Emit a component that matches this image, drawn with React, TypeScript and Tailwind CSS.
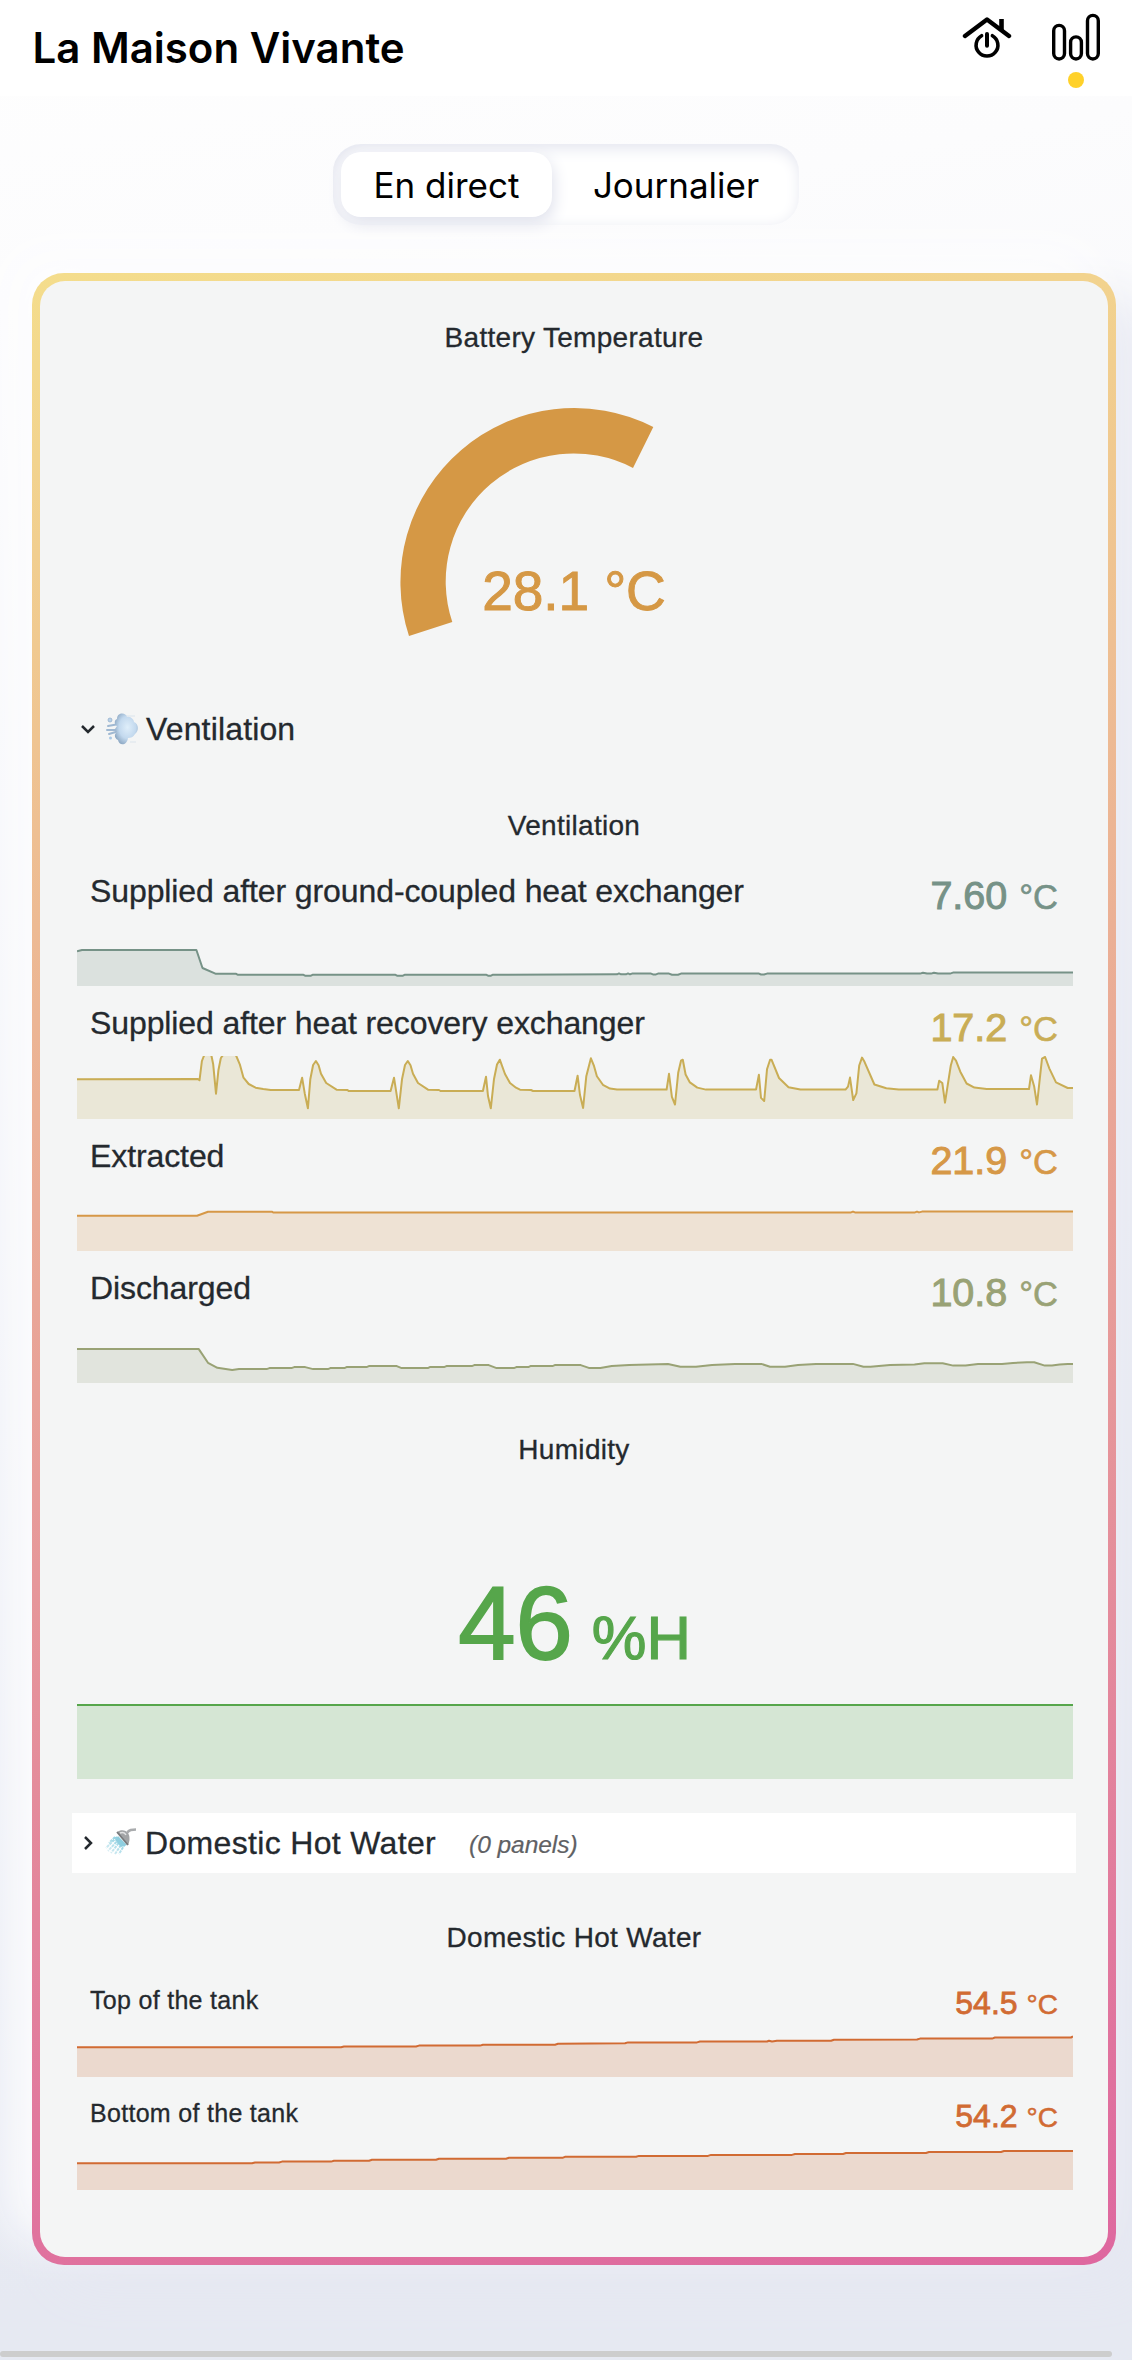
import React from "react";

const HELV = "font-['Liberation_Sans',Arial,sans-serif]";

type Pt = [number, number];

const groundExchanger: Pt[] = [
  [0, 28.3], [5, 27], [119.4, 27], [125.5, 45], [138.4, 50.7], [158.7, 50.7], [160.5, 51.7],
  [226, 51.7], [228, 52.7], [234, 52.7], [236, 51.7], [318, 51.7], [320, 52.7], [326, 52.7], [328, 51.7],
  [409, 51.7], [411, 52.7], [414, 52.7], [416, 51.7], [540, 51.3], [542, 50.4], [544, 51.3], [549, 51.3],
  [551, 50.4], [553, 51.3], [555, 50.6], [574, 50.6], [576, 51.4], [579, 51.4], [581, 50.6], [592, 50.6],
  [595, 51.7], [601, 51.7], [604, 50.6], [682, 50.6], [684, 51.5], [687, 51.5], [690, 50.6], [843, 50.6],
  [846, 49.7], [850, 50.6], [854, 50.6], [857, 49.7], [861, 50.6], [873, 50.6], [876, 49.6], [996, 49.6],
];

const heatRecovery: Pt[] = [
  [0, 23.3], [120.7, 23], [122.5, 24.3], [124.9, 5], [126.9, 0], [129, -3], [132, -3], [134.5, 0], [136.2, 8.3], [139, 37.7],
  [141.4, 14.3], [143.8, 2.3], [145.2, 0], [148, -3], [156, -3], [159.3, 0], [162.8, 8.3], [166.5, 21.7],
  [171.7, 28], [178.6, 31.7], [186.2, 33], [193.7, 34], [222, 34], [225.1, 21.7], [227.8, 37.7], [230.9, 52.3],
  [233.3, 23.3], [236.1, 9], [238.9, 5], [241.6, 9.3], [244, 17.7], [249.2, 27], [259.5, 33.7], [270.5, 34],
  [271.6, 35], [313.6, 35], [317, 21.7], [319.5, 37.7], [321.8, 52.3], [325, 23.3], [328, 9], [330.8, 5],
  [333.5, 9.3], [336, 17.7], [341, 27], [351, 33.7], [362, 34], [363.5, 35], [405.9, 35], [409, 20.7],
  [411, 40], [413.8, 52.3], [417, 23], [420, 8.5], [422.8, 3.7], [428, 18], [433, 27], [439, 31.7], [443, 33.7], [454, 34],
  [456, 35], [497.5, 35], [500.6, 19.7], [503, 39], [506.1, 52], [509.3, 20.2], [513.9, 2.3], [517, 9.9],
  [519.9, 20.2], [525.9, 28.8], [533, 32.6], [540, 33.6], [589.6, 33.6], [592, 17.8], [594.9, 40.9],
  [598, 48.5], [601.2, 16.8], [604, 4.7], [605.8, 3.7], [608.6, 18.5], [612.9, 26.4], [620.3, 31.6],
  [629, 33.6], [679, 33.6], [681.9, 18.8], [684, 41.9], [687.2, 45], [690, 13.3], [693.1, 3.7],
  [694.5, 3.7], [702, 22], [711.5, 31.2], [723.4, 33.6], [768.5, 33.6], [771, 30.6], [773, 21.6],
  [776.2, 44], [779.4, 37.4], [782.2, 9.5], [785, 1.6], [787.5, 5.8], [797.4, 28.5], [809.3, 32.3],
  [821.7, 33.6], [860.4, 33.6], [862.2, 24.7], [865.3, 27], [868, 46.7], [871.3, 25.4], [873.8, 9.5],
  [876.2, 1], [879, 4.7], [883.3, 15.7], [889.6, 27.5], [897.4, 31.6], [909.7, 33], [952, 33], [954, 19.2],
  [957.2, 30.6], [960, 48.5], [962.5, 25.4], [965, 2.7], [968.1, 1], [972.4, 12.6], [979, 26.4],
  [990.7, 32], [996, 32],
];

const extracted: Pt[] = [
  [0, 27.7], [120, 27.7], [131, 23.7], [194.8, 23.7], [196.5, 24.6], [774, 24.4], [776, 23.6], [778, 24.4],
  [838, 24.4], [840, 23.6], [842, 24.4], [845, 23.6], [996, 23.6],
];

const discharged: Pt[] = [
  [0, 29.1], [121.8, 29.1], [131, 42.8], [140.4, 47.8], [155.2, 50.1], [162, 49.1], [189.6, 49.1],
  [192.4, 48.1], [214.4, 48.1], [217.2, 47.1], [228.2, 47.1], [236.1, 49.1], [250.9, 49.1], [253.3, 48.1],
  [267.4, 48.1], [269.5, 47.1], [289.5, 47.1], [291.9, 46.1], [319.8, 46.1], [324.6, 48.1], [350.8, 48.1],
  [352.8, 47.1], [367, 47.1], [369.4, 46.1], [394.8, 46.1], [397.3, 45.1], [411.7, 45.1], [419.6, 48.1],
  [436.9, 48.1], [439.3, 47.1], [451.3, 47.1], [453.4, 46.1], [475.4, 46.1], [477.8, 45.1], [503.7, 45.1],
  [511.8, 47.9], [523.4, 47.9], [534.7, 46], [552.3, 45], [591, 43.9], [603.4, 46.7], [619, 46.7],
  [635, 45], [658, 43.9], [684.3, 43.9], [693, 46.7], [708, 46.7], [721, 45], [739, 43.9], [775.9, 43.9],
  [786.5, 46.7], [793.5, 46.7], [813, 45], [837.5, 44.4], [847.4, 43.2], [865.7, 43.2], [876.2, 45.6],
  [888.6, 45.6], [901, 43.9], [925, 43.9], [936, 42.9], [950, 42.2], [957.2, 42.2], [967.8, 45.6],
  [975, 45.6], [982.6, 44.6], [990.7, 43.9], [996, 43.9],
];

const tankTop: Pt[] = [
  [0, 18.3], [264, 18.3], [267, 17.5], [339, 17.5], [342, 16.6], [403, 16.6], [406, 15.7], [478, 15.7],
  [481, 14.8], [548, 14.3], [551, 13.4], [620, 13.4], [623, 12.5], [690, 12.5], [692, 11.7], [695, 12.5],
  [700, 11.7], [754, 11.7], [757, 10.7], [840, 10.5], [843, 9.6], [915, 9.6], [918, 8.5], [994, 8.5], [996, 7.5],
];

const tankBottom: Pt[] = [
  [0, 21.3], [175, 21.3], [178, 20.5], [202, 20.5], [205, 19.6], [254, 19.6], [257, 18.7], [292, 18.7],
  [295, 17.8], [359, 17.8], [362, 16.7], [429, 16.7], [432, 15.7], [486, 15.7], [488, 14.8], [559, 14.8],
  [562, 13.9], [631, 13.9], [634, 12.9], [715, 12.9], [718, 12], [766, 12], [769, 11], [849, 11],
  [852, 10], [924, 10], [927, 9], [996, 9],
];

function Spark({ points, height, color, fill }: { points: Pt[]; height: number; color: string; fill: string }) {
  const line = points.map(([x, y]) => `${x},${y}`).join(" ");
  return (
    <svg className="block w-[996px] shrink-0 overflow-hidden" height={height} viewBox={`0 0 996 ${height}`}>
      <polygon points={`0,${height} ${line} 996,${height}`} fill={fill} />
      <polyline points={line} fill="none" stroke={color} strokeWidth="2" strokeLinejoin="round" />
    </svg>
  );
}

interface Reading {
  label: string;
  value: string;
  color: string;
  fill: string;
  points: Pt[];
}

const ventilation: Reading[] = [
  { label: "Supplied after ground-coupled heat exchanger", value: "7.60", color: "#769287", fill: "#dbe1de", points: groundExchanger },
  { label: "Supplied after heat recovery exchanger", value: "17.2", color: "#c9ad55", fill: "#eae7d7", points: heatRecovery },
  { label: "Extracted", value: "21.9", color: "#d69847", fill: "#eee2d4", points: extracted },
  { label: "Discharged", value: "10.8", color: "#99a275", fill: "#e1e4dd", points: discharged },
];

const tank: Reading[] = [
  { label: "Top of the tank", value: "54.5", color: "#d16b33", fill: "#ebd9ce", points: tankTop },
  { label: "Bottom of the tank", value: "54.2", color: "#d16b33", fill: "#ebd9ce", points: tankBottom },
];

function VentRow({ r }: { r: Reading }) {
  return (
    <div className="flex h-[132.3px] flex-col justify-end">
      <div className="flex h-[69.3px] items-start justify-between pl-[13px] pr-[15px]">
        <span className="mt-[19px] text-[32px] leading-[36px] tracking-[-0.1px] [-webkit-text-stroke:0.3px_currentColor]">{r.label}</span>
        <span className="mt-[19px] whitespace-pre text-[39.5px] leading-[44px]" style={{ color: r.color }}>
          <span className="[-webkit-text-stroke:1px_currentColor]">{r.value}</span>
          <span className="ml-[12px] text-[34.5px] [-webkit-text-stroke:0.6px_currentColor]">°C</span>
        </span>
      </div>
      <Spark points={r.points} height={63} color={r.color} fill={r.fill} />
    </div>
  );
}

function TankRow({ r }: { r: Reading }) {
  return (
    <div className="flex h-[113px] flex-col justify-end">
      <div className="flex h-[65px] items-start justify-between pl-[13px] pr-[15px]">
        <span className="mt-[21px] text-[25px] leading-[30px] tracking-[0.3px] [-webkit-text-stroke:0.3px_currentColor]">{r.label}</span>
        <span className="mt-[20px] whitespace-pre text-[32px] leading-[38px]" style={{ color: r.color }}>
          <span className="[-webkit-text-stroke:0.8px_currentColor]">{r.value}</span>
          <span className="ml-[9px] text-[28px] [-webkit-text-stroke:0.5px_currentColor]">°C</span>
        </span>
      </div>
      <Spark points={r.points} height={48} color={r.color} fill={r.fill} />
    </div>
  );
}

function PanelTitle({ children }: { children: React.ReactNode }) {
  return <h3 className="-ml-[2px] text-center text-[28px] leading-[32px] tracking-[0.3px] [-webkit-text-stroke:0.3px_currentColor]">{children}</h3>;
}

function HomePowerIcon() {
  return (
    <svg className="block" width="50" height="44" viewBox="0 0 50 44" fill="none" stroke="#000" strokeLinecap="round" strokeLinejoin="round">
      <path d="M3 21 L25 4.500 L47 21" strokeWidth="4.400" />
      <path d="M39.500 4 V15" strokeWidth="4.600" strokeLinecap="butt" />
      <path d="M19.600 20.700 A10.900 10.900 0 1 0 30.400 20.700" strokeWidth="3.600" />
      <path d="M25 19 V30.700" strokeWidth="4" />
    </svg>
  );
}

function BarsIcon() {
  return (
    <svg className="block" width="48" height="50" viewBox="0 0 48 50" fill="none" stroke="#000" strokeWidth="3.400">
      <rect x="1.700" y="13.400" width="10.800" height="33.600" rx="5.400" />
      <rect x="18.600" y="24.900" width="10.800" height="22.100" rx="5.400" />
      <rect x="35.500" y="3.400" width="10.800" height="43.600" rx="5.400" />
    </svg>
  );
}

function WindIcon() {
  return (
    <svg className="block" width="32" height="34" viewBox="0 0 32 34">
      <defs>
        <radialGradient id="puff" cx="0.55" cy="0.45" r="0.6">
          <stop offset="0" stopColor="#dfeefa" />
          <stop offset="0.6" stopColor="#c3d9ee" />
          <stop offset="1" stopColor="#8ea9c4" />
        </radialGradient>
      </defs>
      <path d="M20 4 H29 M24 30 H30" stroke="#dbe4ec" strokeWidth="1" />
      <path d="M2 14 L13 12 M1 18 H13 M3 22 L13 19" stroke="#9fb8d2" strokeWidth="2" strokeLinecap="round" />
      <circle cx="4" cy="8" r="2" fill="#b9d1e8" stroke="#8facca" strokeWidth="0.700" />
      <circle cx="4.500" cy="26" r="1.500" fill="#a9c8e6" />
      <path d="M11 7 C11 0 20 0 21 5 C25 4 28 8 28 10 C33 12 33 19 29 22 C27 25 25 26 22 26 C21 34 13 34 12 28 C8 26 8 22 11 20 L9 17 L11 14 C8 12 8 8 11 7 Z" fill="url(#puff)" />
    </svg>
  );
}

function ShowerIcon() {
  return (
    <svg className="block" width="32" height="30" viewBox="0 0 32 30">
      <defs>
        <linearGradient id="spray" x1="1" y1="0" x2="0" y2="1">
          <stop offset="0" stopColor="#78c8dc" />
          <stop offset="1" stopColor="#e6f3f7" />
        </linearGradient>
      </defs>
      <path d="M12 9 L1 20 M14 11 L3 23 M16 12 L6 25 M18 14 L10 26 M20 16 L14 26 M10 9 L4 15" stroke="url(#spray)" strokeWidth="2" strokeDasharray="3 0.800" />
      <path d="M13 8 L22 17 L16 19 L10 12 Z" fill="#8fcfe0" />
      <path d="M12 4 C16 1 21 2 23 5 C25 8 25 13 23 17 Z" fill="#a2a4a6" />
      <path d="M12 4 L23 17" stroke="#77797b" strokeWidth="1.800" />
      <path d="M22 5 C24 1.500 27 1.500 31 1.500" fill="none" stroke="#a9abad" strokeWidth="2.500" />
      <path d="M15 5 C18 4 20 5 21 7" fill="none" stroke="#e2e3e4" strokeWidth="1.500" />
    </svg>
  );
}

export default function App() {
  return (
    <div className="flex h-[2360px] w-[1132px] flex-col overflow-hidden bg-[linear-gradient(170deg,#fefefe_0%,#fcfcfd_12%,#eff1f7_55%,#e6e9f2_90%)]">
      <header className="relative z-10 flex h-[96px] shrink-0 items-start justify-between bg-white pl-[32.5px] pr-[32px]">
        <h1 className="mt-[24px] font-['Inter',sans-serif] text-[42px] font-semibold leading-[48px] text-black">La Maison Vivante</h1>
        <nav className="flex gap-[40px]">
          <div className="mt-[15px]">
            <HomePowerIcon />
          </div>
          <div className="mt-[12px] flex flex-col items-center">
            <BarsIcon />
            <span className="mt-[10px] block size-4 rounded-full bg-[#ffd12a]" />
          </div>
        </nav>
      </header>

      <div className="relative z-10 mx-auto mt-[48px] flex h-[81px] w-[466px] shrink-0 rounded-[28px] bg-white p-[8px] font-['Inter',sans-serif] text-[35px] leading-[67px] text-black shadow-[inset_2px_4px_16px_#e2e4ee]">
        <div className="h-[65px] w-[211px] rounded-[20px] bg-white text-center shadow-[2px_6px_16px_#dfe1ec]">En direct</div>
        <div className="flex-1 pl-[9px] text-center">Journalier</div>
      </div>

      <div className="ml-[32px] mt-[48px] h-[1992px] w-[1084px] shrink-0 rounded-[32px] bg-[linear-gradient(170deg,#f4dd8c_0%,#e6979a_60%,#de679f_100%)] p-[8px] shadow-[-24px_-24px_48px_#fdfdfe,24px_24px_48px_#e6e8f2]">
        <div className={"flex h-full flex-col rounded-[25px] bg-[#f4f5f5] pl-[37px] pr-[35px] text-[#24292e] " + HELV}>
          <div className="mt-[41px]">
            <PanelTitle>Battery Temperature</PanelTitle>
          </div>
          <div className="relative mt-[53px] h-[230px] w-[996px]">
            <svg className="block" width="996" height="230" viewBox="77 407 996 230">
              <path d="M409 636 A174 174 0 0 1 653.300 427 L633 468 A128 128 0 0 0 452.300 622 Z" fill="#d59845" />
            </svg>
            <div className="absolute -left-[2px] right-0 top-[152px] text-center text-[55px] leading-[64px] tracking-[-0.1px] text-[#d59845] [-webkit-text-stroke:1px_currentColor]">28.1 °C</div>
          </div>

          <div className="mt-[72px] flex h-[40px] items-center">
            <svg className="ml-[4px] block" width="14" height="9" viewBox="0 0 14 9" fill="none" stroke="#24292e" strokeWidth="2.500">
              <path d="M1 1 L7 7 L13 1" />
            </svg>
            <div className="ml-[11px]">
              <WindIcon />
            </div>
            <h2 className="ml-[8px] text-[32px] leading-[40px] tracking-[0.15px] [-webkit-text-stroke:0.3px_currentColor]">Ventilation</h2>
          </div>

          <div className="mt-[61px]">
            <PanelTitle>Ventilation</PanelTitle>
          </div>
          <div className="mt-[12px]">
            {ventilation.map((r) => (
              <VentRow key={r.label} r={r} />
            ))}
          </div>

          <div className="mt-[51px]">
            <PanelTitle>Humidity</PanelTitle>
          </div>
          <div className="-ml-[1px] mt-[98px] flex h-[120px] items-baseline justify-center text-[#56a64b]">
            <span className="text-[103px] leading-[120px] [-webkit-text-stroke:1.8px_currentColor]">46</span>
            <span className="ml-[19px] text-[61.5px] [-webkit-text-stroke:1.2px_currentColor]">%H</span>
          </div>
          <div className="mt-[20px] h-[75px] w-[996px] border-t-2 border-[#56a64b] bg-[#d5e6d4]" />

          <div className="-ml-[5px] mt-[34px] flex h-[60px] w-[1004px] items-center bg-white">
            <svg className="ml-[12px] block" width="9" height="14" viewBox="0 0 9 14" fill="none" stroke="#24292e" strokeWidth="2.500">
              <path d="M1 1 L7 7 L1 13" />
            </svg>
            <div className="ml-[12px]">
              <ShowerIcon />
            </div>
            <h2 className="ml-[8px] text-[32px] leading-[40px] tracking-[0.33px] [-webkit-text-stroke:0.3px_currentColor]">Domestic Hot Water</h2>
            <span className="ml-[33px] mt-[4px] text-[24.5px] italic leading-[30px] tracking-[-0.05px] text-[#5f6164] [-webkit-text-stroke:0.2px_currentColor]">(0 panels)</span>
          </div>

          <div className="mt-[49px]">
            <PanelTitle>Domestic Hot Water</PanelTitle>
          </div>
          <div className="mt-[10px]">
            {tank.map((r) => (
              <TankRow key={r.label} r={r} />
            ))}
          </div>
        </div>
      </div>

      <div className="mt-auto mb-[3px] h-[6px] w-[1112px] shrink-0 rounded-full bg-[#cdcdcd]" />
    </div>
  );
}
